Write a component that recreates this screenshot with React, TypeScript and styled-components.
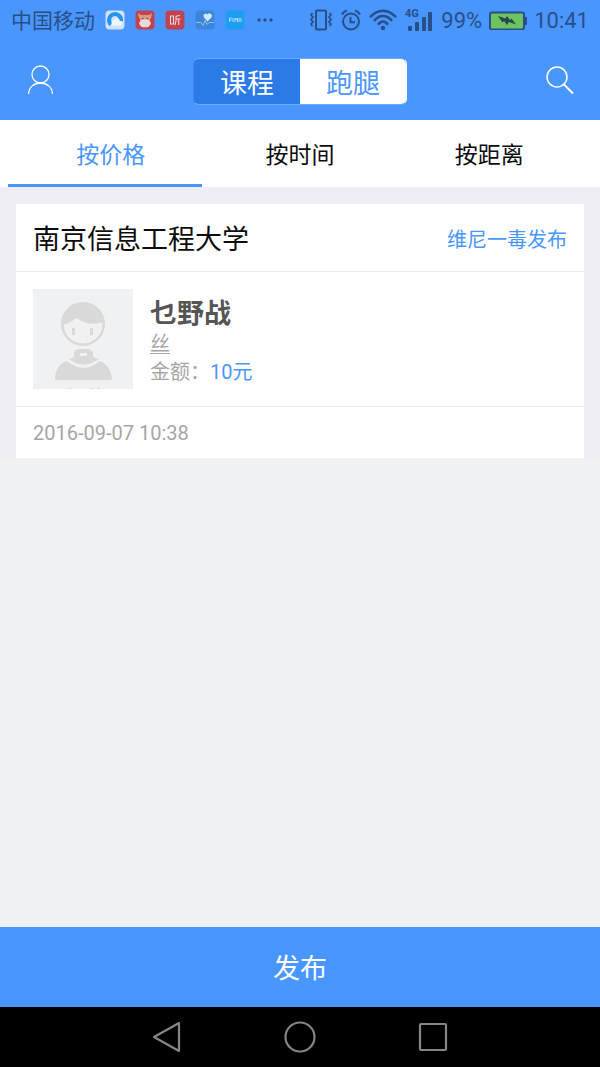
import React, { useState } from "react";
import styled, { createGlobalStyle } from "styled-components";

const GlobalStyle = createGlobalStyle`
  * { box-sizing: border-box; }
  body {
    margin: 0;
    background: #f0f1f3;
    font-family: Roboto, "Noto Sans CJK SC", sans-serif;
  }
  button {
    margin: 0;
    padding: 0;
    border: 0;
    background: none;
    font: inherit;
    color: inherit;
    cursor: pointer;
  }
  svg { display: block; }
`;

const blue = "#4a96ff";
const ink = "#284f89";

const Screen = styled.div`
  display: flex;
  flex-direction: column;
  min-height: 100vh;
`;

const StatusBar = styled.div`
  display: flex;
  justify-content: space-between;
  align-items: center;
  height: 40px;
  padding: 0 11px;
  background: ${blue};
  color: ${ink};
  font-size: 22px;
  line-height: 32px;
  white-space: nowrap;
`;

const StatusGroup = styled.div<{ $gap: number }>`
  display: flex;
  align-items: center;
  gap: ${(p) => p.$gap}px;
`;

const StatusText = styled.span`
  padding-top: 2px;
`;

const Carrier = styled(StatusText)`
  font-size: 21px;
`;

const Header = styled.header`
  display: flex;
  justify-content: space-between;
  align-items: center;
  height: 80px;
  padding: 0 24px;
  background: ${blue};
`;

const IconButton = styled.button`
  display: flex;
  align-items: center;
  justify-content: center;
  width: 32px;
  height: 32px;
`;

const Segments = styled.div`
  display: flex;
  height: 47px;
  margin-top: 3px;
  border: 1px solid #fff;
  border-color: #6faaff #fff #6faaff #3d87ee;
  border-radius: 6px;
  overflow: hidden;
`;

const Segment = styled.button<{ $active: boolean }>`
  width: 106px;
  padding-top: 4px;
  font-size: 27px;
  line-height: 40px;
  color: ${(p) => (p.$active ? "#fff" : blue)};
  background: ${(p) => (p.$active ? "#2a7ae8" : "#fff")};
`;

const Tabs = styled.nav`
  display: flex;
  height: 67px;
  padding: 0 16px;
  background: #fff;
`;

const Tab = styled.button<{ $active: boolean }>`
  position: relative;
  flex: 1;
  padding-top: 4px;
  font-size: 23px;
  line-height: 36px;
  color: ${(p) => (p.$active ? blue : "#0c0c0c")};

  &::after {
    content: "";
    display: ${(p) => (p.$active ? "block" : "none")};
    position: absolute;
    left: -8px;
    right: 3px;
    bottom: 0;
    height: 3px;
    background: ${blue};
  }
`;

const List = styled.main`
  padding: 17px 16px 0;
  background: #efeef4;
`;

const Card = styled.article`
  background: #fff;
`;

const CardHead = styled.div`
  display: flex;
  justify-content: space-between;
  align-items: center;
  height: 68px;
  padding: 4px 17px 0;
  border-bottom: 1px solid #ececee;
`;

const School = styled.h2`
  margin: 0;
  font-size: 27px;
  font-weight: 400;
  line-height: 40px;
  color: #0c0c0c;
`;

const Publisher = styled.a`
  font-size: 20px;
  line-height: 30px;
  color: ${blue};
  text-decoration: none;
`;

const CardBody = styled.div`
  display: flex;
  gap: 17px;
  height: 135px;
  padding: 17px;
  border-bottom: 1px solid #ececee;
`;

const Details = styled.div`
  display: flex;
  flex-direction: column;
  padding-top: 9px;
`;

const Name = styled.h3`
  margin: 0;
  font-size: 27px;
  font-weight: 700;
  line-height: 32px;
  color: #555;
`;

const Line = styled.p`
  margin: 0;
  font-size: 20px;
  line-height: 28px;
  color: #a6a6a6;
`;

const Note = styled.span`
  text-decoration: underline;
  text-decoration-thickness: 1px;
  text-underline-offset: 2px;
`;

const Amount = styled.span`
  color: ${blue};
`;

const CardFoot = styled.div`
  height: 51px;
  padding: 0 17px;
  font-size: 20px;
  line-height: 52px;
  color: #a6a6a6;
`;

const Publish = styled.button`
  height: 80px;
  margin-top: auto;
  padding-top: 4px;
  background: ${blue};
  color: #fff;
  font-size: 27px;
  line-height: 40px;
`;

const NavBar = styled.nav`
  display: flex;
  justify-content: center;
  align-items: center;
  gap: 101px;
  height: 60px;
  background: #000;
`;

const Tile = ({ fill, children }: { fill: string; children: React.ReactNode }) => (
  <svg width="20" height="20" viewBox="0 0 20 20" aria-hidden="true">
    <rect x="0.5" y="0.5" width="19" height="19" rx="4" fill={fill} />
    {children}
  </svg>
);

const AppTiles = () => (
  <>
    <Tile fill="#cfe2f8">
      <path d="M6 14.5A6 6 0 1 1 16 11" fill="none" stroke="#2394f0" strokeWidth="4" />
      <path d="M8 15.5a3 3 0 0 1 1-5.6 3.4 3.4 0 0 1 6 1.2 2.3 2.3 0 0 1 1 4.4z" fill="#edf5ff" />
    </Tile>
    <Tile fill="#c2424f">
      <path d="M3 3l3 2h8l3-2-1 5-2 2H6L4 8z" fill="#d99b80" />
      <path d="M5 6h10v5H5z" fill="#d99b80" />
      <ellipse cx="10" cy="13.3" rx="5.7" ry="4" fill="#ead9d9" />
      <path d="M7 8.5h1.5M11.5 8.5H13" stroke="#703040" />
    </Tile>
    <Tile fill="#c2424f">
      <path
        d="M5.5 6h3v8h-3zM15 5.5l-4 .8V11l-1 4M11 9h4.5M13.7 9v6"
        fill="none"
        stroke="#efd8df"
        strokeWidth="1.1"
      />
    </Tile>
    <Tile fill="#3b86d8">
      <path d="M1 12.5h5l2 3 2-5 2 4 2-2h5" fill="none" stroke="#8fbdf0" strokeWidth="1" />
      <path d="M12.5 11.5L9 7.5a2.2 2.2 0 0 1 3.5-3 2.2 2.2 0 0 1 4 3z" fill="#d2e6fc" />
    </Tile>
    <Tile fill="#1f9df0">
      <path
        d="M4.5 12V8h2.2M4.5 10h2M8 8v4M10 12V8l1.2 2L12.5 8v4M14 12V9l1-1 1 1v3"
        fill="none"
        stroke="#b9e2ff"
        strokeWidth="0.9"
      />
    </Tile>
    <svg width="20" height="20" viewBox="0 0 20 20" fill={ink} aria-hidden="true">
      <circle cx="4" cy="10" r="1.7" />
      <circle cx="10" cy="10" r="1.7" />
      <circle cx="16" cy="10" r="1.7" />
    </svg>
  </>
);

const VibrateIcon = () => (
  <svg width="24" height="22" viewBox="0 0 24 22" fill="none" stroke={ink} strokeWidth="2" aria-hidden="true">
    <rect x="7" y="1.5" width="10" height="19" rx="1" />
    <path
      d="M3.5 4L2 6l2 2-2 2.5L4 13l-2 2 1.5 2M20.5 4L22 6l-2 2 2 2.5-2 2.5 2 2-1.5 2"
      strokeWidth="1.7"
    />
  </svg>
);

const AlarmIcon = () => (
  <svg width="20" height="22" viewBox="0 0 20 22" fill="none" stroke={ink} strokeWidth="2" aria-hidden="true">
    <circle cx="10" cy="12.5" r="8" />
    <path d="M9.5 8v5.200h4.500M1 5.500Q2.500 2.500 6 1.500M19 5.500Q17.500 2.500 14 1.500" />
  </svg>
);

const WifiIcon = () => (
  <svg width="28" height="22" viewBox="0 0 28 22" fill="none" stroke={ink} strokeWidth="2.5" aria-hidden="true">
    <path d="M1 8.200Q7 1.700 14 1.700T27 8.200M5 12Q9 7 14 7T23 12M9 15.700Q11.300 12.500 14 12.500T19 15.700" />
    <circle cx="14" cy="19" r="2.3" fill={ink} stroke="none" />
  </svg>
);

const SignalIcon = () => (
  <svg width="28" height="26" viewBox="0 0 28 26" fill={ink} aria-hidden="true">
    <text x="0" y="10" fontFamily="Roboto, sans-serif" fontSize="11" fontWeight="700">
      4G
    </text>
    <rect x="3" y="19" width="4" height="5" rx="1" />
    <rect x="10" y="15" width="4" height="9" rx="1" />
    <rect x="17" y="10" width="4" height="14" rx="1" />
    <rect x="23" y="5" width="4" height="19" rx="1" />
  </svg>
);

const BatteryIcon = () => (
  <svg width="38" height="20" viewBox="0 0 38 20" aria-hidden="true">
    <rect x="1" y="2.5" width="34" height="17" rx="2" fill="#6cc360" stroke={ink} strokeWidth="2" />
    <rect x="35" y="7" width="3" height="8" rx="1" fill={ink} />
    <path d="M9 6l7.500 2.500L18 6l3 4 1.500-1.500 4.500 6-7-2.500-2 3-3-4-1.500 1.500z" fill="#234b50" />
  </svg>
);

const UserIcon = () => (
  <svg width="26" height="30" viewBox="0 0 26 30" fill="none" stroke="#fff" strokeWidth="1.3" aria-hidden="true">
    <circle cx="13.5" cy="9.5" r="8.5" />
    <path d="M1.500 29C2 22 7 18 13.500 18s11.500 4 12 11" />
  </svg>
);

const SearchIcon = () => (
  <svg width="28" height="30" viewBox="0 0 28 30" fill="none" stroke="#fff" aria-hidden="true">
    <circle cx="11" cy="12" r="10" strokeWidth="1.5" />
    <path d="M18 19.500L27 28.500" strokeWidth="2" />
  </svg>
);

const Avatar = () => (
  <svg width="100" height="100" viewBox="0 0 100 100" role="img" aria-label="头像">
    <rect width="100" height="100" fill="#f0f1f2" />
    <circle cx="50" cy="35" r="20.7" fill="#f0f1f2" stroke="#d9d9d9" strokeWidth="2.5" />
    <path d="M28.500 36A21.500 22 0 0 1 71.500 36L70 33Q57 38 43 29Q38 34 30 36z" fill="#d9d9d9" />
    <path d="M40.500 39v7M58.500 39v7" stroke="#d9d9d9" strokeWidth="3" />
    <path d="M22 91C22 80 27 74 34 72Q50 86 67 72C74 75 79 82 79 91z" fill="#d9d9d9" />
    <path d="M36 70l5-2v-5l3-3h12l4 3v5l6 2Q50 81 36 70z" fill="#d9d9d9" />
    <rect x="47" y="64" width="7" height="3" fill="#f0f1f2" />
    <path d="M36 99.500h2M57 99.500h3M64 99.500h3" stroke="#d9d9d9" />
  </svg>
);

const tabs = ["按价格", "按时间", "按距离"];
const segments = ["课程", "跑腿"];

export default function App() {
  const [tab, setTab] = useState(0);
  const [segment, setSegment] = useState(0);

  return (
    <Screen lang="zh-CN">
      <GlobalStyle />
      <StatusBar>
        <StatusGroup $gap={10}>
          <Carrier>中国移动</Carrier>
          <AppTiles />
        </StatusGroup>
        <StatusGroup $gap={8}>
          <StatusGroup $gap={8}>
            <VibrateIcon />
            <AlarmIcon />
            <WifiIcon />
            <SignalIcon />
          </StatusGroup>
          <StatusGroup $gap={7}>
            <StatusText>99%</StatusText>
            <BatteryIcon />
            <StatusText>10:41</StatusText>
          </StatusGroup>
        </StatusGroup>
      </StatusBar>

      <Header>
        <IconButton aria-label="个人中心">
          <UserIcon />
        </IconButton>
        <Segments>
          {segments.map((label, i) => (
            <Segment key={label} $active={i === segment} onClick={() => setSegment(i)}>
              {label}
            </Segment>
          ))}
        </Segments>
        <IconButton aria-label="搜索">
          <SearchIcon />
        </IconButton>
      </Header>

      <Tabs>
        {tabs.map((label, i) => (
          <Tab key={label} $active={i === tab} onClick={() => setTab(i)}>
            {label}
          </Tab>
        ))}
      </Tabs>

      <List>
        <Card>
          <CardHead>
            <School>南京信息工程大学</School>
            <Publisher href="#publisher">维尼一毒发布</Publisher>
          </CardHead>
          <CardBody>
            <Avatar />
            <Details>
              <Name>乜野战</Name>
              <Line>
                <Note>丝</Note>
              </Line>
              <Line>
                金额：<Amount>10元</Amount>
              </Line>
            </Details>
          </CardBody>
          <CardFoot>
            <time dateTime="2016-09-07T10:38">2016-09-07 10:38</time>
          </CardFoot>
        </Card>
      </List>

      <Publish>发布</Publish>

      <NavBar>
        <IconButton aria-label="返回">
          <svg width="32" height="32" viewBox="0 0 32 32" fill="none" stroke="#858585" strokeWidth="2.2" strokeLinejoin="round">
            <path d="M28 2v28L3 16z" />
          </svg>
        </IconButton>
        <IconButton aria-label="主页">
          <svg width="32" height="32" viewBox="0 0 32 32" fill="none" stroke="#858585" strokeWidth="2.2">
            <circle cx="16" cy="16" r="14.5" />
          </svg>
        </IconButton>
        <IconButton aria-label="最近任务">
          <svg width="32" height="32" viewBox="0 0 32 32" fill="none" stroke="#858585" strokeWidth="2.2">
            <rect x="3" y="3" width="26" height="26" rx="1" />
          </svg>
        </IconButton>
      </NavBar>
    </Screen>
  );
}
